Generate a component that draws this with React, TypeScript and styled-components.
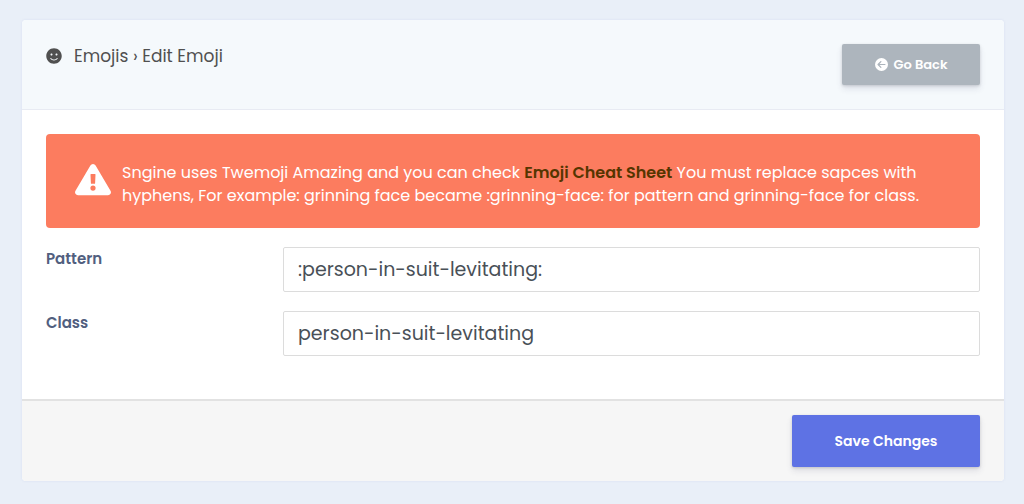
import React from "react";
import styled, { createGlobalStyle } from "styled-components";
import { FaSmile } from "react-icons/fa";
import { FaCircleArrowLeft } from "react-icons/fa6";

const GlobalStyle = createGlobalStyle`
  *, *::before, *::after { box-sizing: border-box; }
  body {
    margin: 0;
    background: #e9eff8;
    color: #525f7f;
    font-family: Poppins, Inter, "Liberation Sans", sans-serif;
    font-size: 16px;
    line-height: 23px;
  }
`;

const Page = styled.main`
  padding: 20px 20px 22px 22px;
`;

const Card = styled.form`
  border-radius: 4px;
  background: #fff;
  box-shadow: 0 0 2px rgba(190, 200, 235, 0.5);
  overflow: hidden;
`;

const CardHeader = styled.header`
  display: flex;
  justify-content: space-between;
  align-items: flex-start;
  padding: 24px;
  border-bottom: 1px solid #e8ebf3;
  background: #f5f9fc;
`;

const Title = styled.h1`
  display: flex;
  align-items: center;
  gap: 12px;
  margin: 0;
  color: #505050;
  font-size: 17px;
  font-weight: 400;
  line-height: 24px;
`;

const Button = styled.button<{ $primary?: boolean }>`
  display: flex;
  align-items: center;
  justify-content: center;
  gap: 6px;
  width: ${(p) => (p.$primary ? 188 : 138)}px;
  height: ${(p) => (p.$primary ? 52 : 41)}px;
  border: 0;
  border-radius: 2px;
  background: ${(p) => (p.$primary ? "#5e72e4" : "#adb5bd")};
  box-shadow: 0 4px 6px rgba(50, 50, 93, 0.11), 0 1px 3px rgba(0, 0, 0, 0.14);
  color: #fff;
  font-family: inherit;
  font-size: ${(p) => (p.$primary ? 14 : 13)}px;
  font-weight: 600;
  cursor: pointer;
`;

const CardBody = styled.div`
  display: flex;
  flex-direction: column;
  gap: 19px;
  padding: 24px 24px 43px;
`;

const Alert = styled.div`
  display: flex;
  align-items: flex-start;
  gap: 11px;
  padding: 27px 48px 21px 29px;
  border-radius: 4px;
  background: #fc7c5f;
  color: #fff;

  p { margin: 0; }
`;

const WarningIcon = styled.svg`
  flex: none;
  width: 36px;
  height: 38px;
`;

const AlertLink = styled.a`
  color: #553500;
  font-weight: 600;
  text-decoration: none;
`;

const Field = styled.div`
  display: grid;
  grid-template-columns: minmax(0, 237fr) minmax(0, 697fr);
  align-items: start;
`;

const Label = styled.label`
  color: #525f7f;
  font-size: 15px;
  font-weight: 600;
`;

const Input = styled.input`
  width: 100%;
  height: 45px;
  padding: 0 14px;
  border: 1px solid #dcdcdc;
  border-radius: 2px;
  background: #fff;
  color: #495057;
  font-family: inherit;
  font-size: 19px;
  outline: 0;
`;

const CardFooter = styled.footer`
  display: flex;
  justify-content: flex-end;
  padding: 14px 24px;
  border-top: 2px solid #e2e2e2;
  background: #f6f6f6;
`;

export default function App() {
  return (
    <>
      <GlobalStyle />
      <Page>
        <Card onSubmit={(e) => e.preventDefault()}>
          <CardHeader>
            <Title>
              <FaSmile size={16} aria-hidden />
              Emojis › Edit Emoji
            </Title>
            <Button type="button">
              <FaCircleArrowLeft size={13} aria-hidden />
              Go Back
            </Button>
          </CardHeader>
          <CardBody>
            <Alert role="alert">
              <WarningIcon viewBox="0 1 36 38" fill="currentColor" aria-hidden>
                <path
                  fillRule="evenodd"
                  d="M15.4 5.4a3 3 0 0 1 5.2 0l14.9 25.4a2.9 2.9 0 0 1-2.5 4.400H3a2.900 2.900 0 0 1-2.500-4.400ZM15.500 14.500l.400 8.800q.1.500.600.500h3q.500 0 .600-.500l.400-8.800q0-.500-.500-.500h-4q-.500 0-.500.500ZM18 25.500a2.600 2.600 0 1 0 0 5.200a2.600 2.600 0 1 0 0-5.200Z"
                />
              </WarningIcon>
              <p>
                Sngine uses Twemoji Amazing and you can check{" "}
                <AlertLink href="#cheat-sheet">Emoji Cheat Sheet</AlertLink> You
                must replace sapces with hyphens, For example: grinning face
                became :grinning-face: for pattern and grinning-face for class.
              </p>
            </Alert>
            <Field>
              <Label htmlFor="pattern">Pattern</Label>
              <Input id="pattern" defaultValue=":person-in-suit-levitating:" />
            </Field>
            <Field>
              <Label htmlFor="class">Class</Label>
              <Input id="class" defaultValue="person-in-suit-levitating" />
            </Field>
          </CardBody>
          <CardFooter>
            <Button type="submit" $primary>
              Save Changes
            </Button>
          </CardFooter>
        </Card>
      </Page>
    </>
  );
}
